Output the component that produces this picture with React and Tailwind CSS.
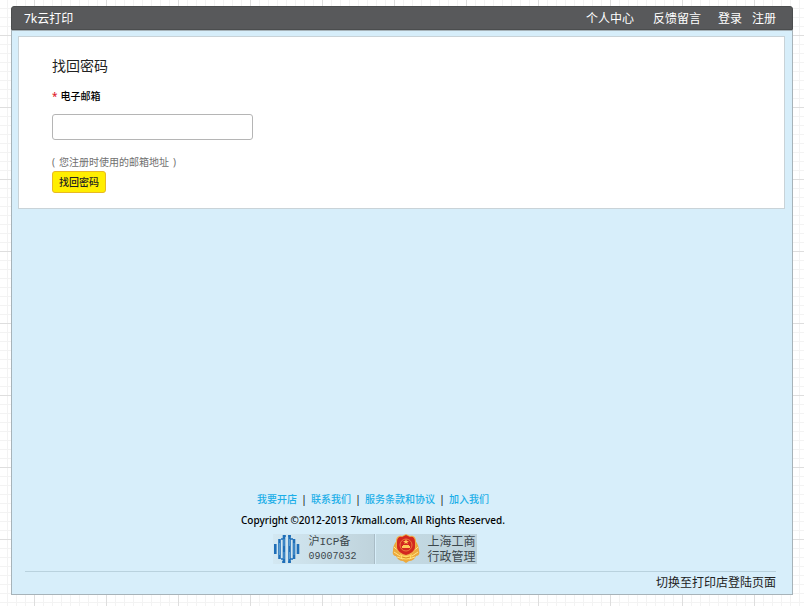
import React from "react";

const footerLinks = ["我要开店", "联系我们", "服务条款和协议", "加入我们"];

function TopBar() {
  return (
    <header className="flex h-6 items-center justify-between rounded-t-[3px] border border-[#4b4d4e] bg-[#58595b] pl-3 pr-4 pt-px text-xs text-white">
      <a href="#home">7k云打印</a>
      <nav className="flex items-center">
        <a href="#center" className="mr-[19px]">个人中心</a>
        <a href="#feedback" className="mr-[17px]">反馈留言</a>
        <a href="#login" className="mr-2.5">登录</a>
        <a href="#register">注册</a>
      </nav>
    </header>
  );
}

function RecoverForm() {
  return (
    <form
      className="flex flex-col items-start border border-[#c9d3d8] bg-white px-[33px] pt-[19px] pb-[15px] text-[10px] leading-4"
      onSubmit={(e) => e.preventDefault()}
    >
      <h1 className="text-sm leading-5 text-[#222]">找回密码</h1>
      <label htmlFor="email" className="mt-3 font-medium text-black">
        <span className="mr-[3px] text-[#e0202c]">*</span>
        电子邮箱
      </label>
      <input
        id="email"
        type="email"
        className="mt-2.5 h-[26px] w-[201px] rounded-[3px] border border-[#b5b5b5] bg-white px-2 text-xs outline-none"
      />
      <p className="mt-3.5 flex gap-1 text-[#707070]">
        <span>(</span>
        <span>您注册时使用的邮箱地址</span>
        <span>)</span>
      </p>
      <button
        type="submit"
        className="mt-px h-[22px] rounded-[3px] border border-[#e8b923] bg-[#ffee00] px-1.5 font-medium leading-5 text-[#222]"
      >
        找回密码
      </button>
    </form>
  );
}

function IcpLogo() {
  return (
    <svg viewBox="0 0 28 30" className="h-[30px] w-7" aria-hidden="true">
      <g fill="none" stroke="#1f6fb8" strokeWidth="2.600">
        <path d="M2.300 10V20M6.500 5V25M11 1V29M16.500 1V29M21 5V25M25 10V20" />
        <path d="M8 5H10M8 25H10M17 5H20M17 25H20M11 2H13M15 2H18M9 28H12M15 28H18" strokeWidth="1.500" />
      </g>
      <path d="M11 5V12M11 18V25M16.500 5V12M16.500 18V25M6.500 9V21M21 9V21" stroke="#6fb0de" strokeWidth=".7" />
    </svg>
  );
}

function PoliceLogo() {
  return (
    <svg viewBox="0 0 28 30" className="h-[30px] w-7" aria-hidden="true">
      <path d="M6 6C3 8 1 12 1 17C0 20 2 22 4 22C5 25 8 27 11 27L14 29L17 27C20 27 23 25 24 22C27 22 28 19 27 17C27 12 25 8 22 6Z" fill="#eda93b" />
      <path d="M2 13L7 18M2 18L8 22M5 23L11 25M26 13L21 18M26 18L20 22M23 23L17 25" stroke="#ffe58b" strokeWidth="1" />
      <path d="M14 0L18 2C22 1 24 4 24 7V13C24 18 19 21 14 23C9 21 4 18 4 13V7C4 4 6 1 10 2Z" fill="#f0b04a" />
      <path d="M14 1L18 3C21 2 23 4 23 8V13C23 17 18 20 14 21C10 20 5 17 5 13V8C5 4 7 2 10 3Z" fill="#d3281f" />
      <circle cx="14" cy="11" r="6" fill="none" stroke="#ee8b42" strokeWidth=".8" />
      <path d="M14 5L14.800 7H17L15.200 8.200L15.800 10L14 9L12.200 10L12.800 8.200L11 7H13.200ZM11 11H17V12H18V14H10V12H11Z" fill="#ffc95a" />
      <path d="M8 20Q14 24 20 20L19 24Q14 27 9 24Z" fill="#ffdb62" />
      <path d="M10 23Q14 25 18 23" stroke="#d98a1f" fill="none" />
    </svg>
  );
}

function Badges() {
  return (
    <div className="mt-1.5 ml-[3px] flex h-[30px] gap-px text-[#3c474c]">
      <a href="#icp" className="flex w-[102px] items-center border-r border-[#a9bcc6] bg-linear-to-r from-[#d3e8f2] to-[#bfd3dc]">
        <IcpLogo />
        <span className="ml-2 font-[Liberation_Mono,'Noto_Sans_CJK_SC',monospace] text-[11px] leading-[14px]">
          沪ICP备<br />
          <span className="text-[10px]">09007032</span>
        </span>
      </a>
      <a href="#registration" className="flex w-[101px] items-center bg-linear-to-r from-[#c4dbe5] to-[#bfd3dc]">
        <span className="ml-4 flex"><PoliceLogo /></span>
        <span className="ml-2 flex flex-col whitespace-nowrap text-xs leading-[15px]">
          <span>上海工商</span>
          <span>行政管理</span>
        </span>
      </a>
    </div>
  );
}

function Footer() {
  return (
    <footer className="mt-auto">
      <div className="flex flex-col items-center pr-[58px] text-[10px] leading-4">
        <ul className="flex">
          {footerLinks.map((text, i) => (
            <li key={text} className="flex">
              {i > 0 && <span className="w-3.5 text-center text-black">|</span>}
              <a href="#footer" className="font-medium text-[#1caee8]">{text}</a>
            </li>
          ))}
        </ul>
        <p className="mt-[5px] font-medium text-black">Copyright ©2012-2013 7kmall.com, All Rights Reserved.</p>
        <Badges />
      </div>
      <div className="ml-[7px] mr-2.5 mt-[7px] flex h-[23px] items-center justify-end border-t border-[#b9d2de] text-xs text-[#222]">
        <a href="#shop">切换至打印店登陆页面</a>
      </div>
    </footer>
  );
}

export default function App() {
  return (
    <div className="flex min-h-screen flex-col bg-white bg-[linear-gradient(to_right,#dedede_1px,transparent_1px),linear-gradient(to_bottom,#dedede_1px,transparent_1px),linear-gradient(to_right,#f3f3f3_1px,transparent_1px),linear-gradient(to_bottom,#f3f3f3_1px,transparent_1px)] bg-size-[72px_72px,72px_72px,9px_9px,9px_9px] bg-position-[34px_35px,34px_35px,7px_8px,7px_8px] pt-1.5 pr-[11px] pb-[11px] pl-[11px] font-['Noto_Sans','Noto_Sans_CJK_SC',sans-serif]">
      <TopBar />
      <main className="flex grow flex-col border border-[#a7b3b9] bg-[#d7eefa] px-1.5 pt-[5px]">
        <div className="mr-px">
          <RecoverForm />
        </div>
        <Footer />
      </main>
    </div>
  );
}
